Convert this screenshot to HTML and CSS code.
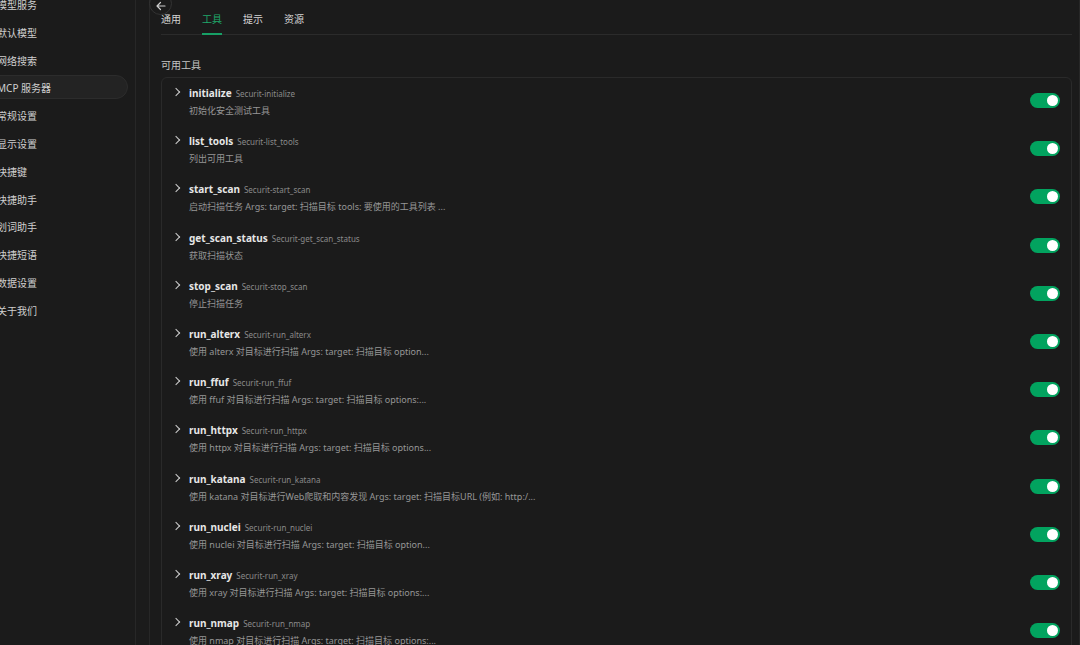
FILE: index.html
```html
<!DOCTYPE html>
<html lang="zh">
<head>
    <meta charset="utf-8">
    <title>设置</title>
    <link rel="stylesheet" href="styles.css">
</head>
<body>
    <div class="page">

        <!-- sidebar -->
        <div class="sidebar">
            <ul class="nav">
                <li>模型服务</li>
                <li>默认模型</li>
                <li>网络搜索</li>
                <li class="active">MCP 服务器</li>
                <li>常规设置</li>
                <li>显示设置</li>
                <li>快捷键</li>
                <li>快捷助手</li>
                <li>划词助手</li>
                <li>快捷短语</li>
                <li>数据设置</li>
                <li>关于我们</li>
            </ul>
        </div>

        <!-- main -->
        <div class="main">
            <div class="panel">
                <div class="back-btn">
                    <svg width="12" height="12" viewBox="0 0 12 12"><path d="M10 6H2M5.5 2.5L2 6l3.5 3.5" fill="none" stroke="#cfcfcf" stroke-width="1.2" stroke-linecap="round" stroke-linejoin="round"/></svg>
                </div>

                <div class="tabs">
                    <span class="tab">通用</span>
                    <span class="tab active">工具</span>
                    <span class="tab">提示</span>
                    <span class="tab">资源</span>
                </div>

                <h3 class="section-title">可用工具</h3>

                <div class="tool-list">
                    <div class="tool">
                        <span class="chevron"></span>
                        <div class="tool-info">
                            <div class="tool-head"><b>initialize</b><span>Securit-initialize</span></div>
                            <p>初始化安全测试工具</p>
                        </div>
                        <span class="switch"></span>
                    </div>
                    <div class="tool">
                        <span class="chevron"></span>
                        <div class="tool-info">
                            <div class="tool-head"><b>list_tools</b><span>Securit-list_tools</span></div>
                            <p>列出可用工具</p>
                        </div>
                        <span class="switch"></span>
                    </div>
                    <div class="tool">
                        <span class="chevron"></span>
                        <div class="tool-info">
                            <div class="tool-head"><b>start_scan</b><span>Securit-start_scan</span></div>
                            <p>启动扫描任务 Args: target: 扫描目标 tools: 要使用的工具列表 ...</p>
                        </div>
                        <span class="switch"></span>
                    </div>
                    <div class="tool">
                        <span class="chevron"></span>
                        <div class="tool-info">
                            <div class="tool-head"><b>get_scan_status</b><span>Securit-get_scan_status</span></div>
                            <p>获取扫描状态</p>
                        </div>
                        <span class="switch"></span>
                    </div>
                    <div class="tool">
                        <span class="chevron"></span>
                        <div class="tool-info">
                            <div class="tool-head"><b>stop_scan</b><span>Securit-stop_scan</span></div>
                            <p>停止扫描任务</p>
                        </div>
                        <span class="switch"></span>
                    </div>
                    <div class="tool">
                        <span class="chevron"></span>
                        <div class="tool-info">
                            <div class="tool-head"><b>run_alterx</b><span>Securit-run_alterx</span></div>
                            <p>使用 alterx 对目标进行扫描 Args: target: 扫描目标 option...</p>
                        </div>
                        <span class="switch"></span>
                    </div>
                    <div class="tool">
                        <span class="chevron"></span>
                        <div class="tool-info">
                            <div class="tool-head"><b>run_ffuf</b><span>Securit-run_ffuf</span></div>
                            <p>使用 ffuf 对目标进行扫描 Args: target: 扫描目标 options:...</p>
                        </div>
                        <span class="switch"></span>
                    </div>
                    <div class="tool">
                        <span class="chevron"></span>
                        <div class="tool-info">
                            <div class="tool-head"><b>run_httpx</b><span>Securit-run_httpx</span></div>
                            <p>使用 httpx 对目标进行扫描 Args: target: 扫描目标 options...</p>
                        </div>
                        <span class="switch"></span>
                    </div>
                    <div class="tool">
                        <span class="chevron"></span>
                        <div class="tool-info">
                            <div class="tool-head"><b>run_katana</b><span>Securit-run_katana</span></div>
                            <p>使用 katana 对目标进行Web爬取和内容发现 Args: target: 扫描目标URL (例如: http:/...</p>
                        </div>
                        <span class="switch"></span>
                    </div>
                    <div class="tool">
                        <span class="chevron"></span>
                        <div class="tool-info">
                            <div class="tool-head"><b>run_nuclei</b><span>Securit-run_nuclei</span></div>
                            <p>使用 nuclei 对目标进行扫描 Args: target: 扫描目标 option...</p>
                        </div>
                        <span class="switch"></span>
                    </div>
                    <div class="tool">
                        <span class="chevron"></span>
                        <div class="tool-info">
                            <div class="tool-head"><b>run_xray</b><span>Securit-run_xray</span></div>
                            <p>使用 xray 对目标进行扫描 Args: target: 扫描目标 options:...</p>
                        </div>
                        <span class="switch"></span>
                    </div>
                    <div class="tool">
                        <span class="chevron"></span>
                        <div class="tool-info">
                            <div class="tool-head"><b>run_nmap</b><span>Securit-run_nmap</span></div>
                            <p>使用 nmap 对目标进行扫描 Args: target: 扫描目标 options:...</p>
                        </div>
                        <span class="switch"></span>
                    </div>
                </div>
            </div>
        </div>
    </div>
</body>
</html>
```

FILE: styles.css
```css
* {
    margin: 0;
    padding: 0;
    box-sizing: border-box;
}

body {
    background: #1b1b1b;
    color: #d4d4d4;
    font-family: "Noto Sans", "Noto Sans CJK SC", sans-serif;
    height: 645px;
    overflow: hidden;
}

.page {
    display: flex;
    height: 645px;
}

/* Sidebar */

.sidebar {
    width: 136px;
    flex-shrink: 0;
    border-right: 1px solid #272727;
    overflow: hidden;
}

.nav {
    list-style: none;
    margin-left: -16px;
    margin-top: -8px;
    width: 144px;
}

.nav li {
    height: 24px;
    line-height: 24px;
    margin-bottom: 3.8px;
    padding-left: 12px;
    font-size: 10px;
    color: #cfcfcf;
    border-radius: 12px;
    border: 1px solid transparent;
}

.nav li.active {
    background: #232323;
    border-color: #2c2c2c;
}

/* Main */

.main {
    flex: 1;
    padding-left: 13px;
    overflow: hidden;
}

.panel {
    position: relative;
    height: 100%;
    border-left: 1px solid #272727;
    border-right: 1px solid #272727;
    padding: 0 7px 0 11px;
}

.back-btn {
    position: absolute;
    left: -1px;
    top: -8px;
    width: 23px;
    height: 23px;
    border-radius: 50%;
    border: 1px solid #333;
    background: #1b1b1b;
    display: flex;
    align-items: center;
    justify-content: center;
    padding-top: 4px;
}

.tabs {
    display: flex;
    gap: 21px;
    border-bottom: 1px solid #2b2b2b;
    padding-top: 12px;
}

.tab {
    font-size: 10px;
    line-height: 14px;
    padding-bottom: 7px;
    color: #d4d4d4;
    border-bottom: 2px solid transparent;
    margin-bottom: -1px;
}

.tab.active {
    color: #1fa86a;
    border-bottom-color: #17a066;
}

.section-title {
    font-size: 10px;
    font-weight: normal;
    color: #c4c4c4;
    line-height: 14px;
    margin-top: 23px;
    margin-bottom: 5px;
}

/* Tool list */

.tool-list {
    border: 1px solid #2a2a2a;
    border-radius: 6px;
    padding-top: 1px;
}

.tool {
    display: flex;
    align-items: flex-start;
    height: 48.2px;
    padding: 5px 11px 0 11px;
}

.chevron {
    width: 16px;
    height: 14px;
    flex-shrink: 0;
    position: relative;
}

.chevron::before {
    content: '';
    position: absolute;
    left: 0;
    top: 5px;
    width: 5px;
    height: 5px;
    border-top: 1.2px solid #cfcfcf;
    border-right: 1.2px solid #cfcfcf;
    transform: rotate(45deg);
}

.tool-info {
    flex: 1;
    min-width: 0;
}

.tool-head {
    line-height: 14px;
    white-space: nowrap;
}

.tool-head b {
    font-size: 10px;
    font-weight: bold;
    color: #e6e6e6;
}

.tool-head span {
    font-size: 8px;
    color: #8a8a8a;
    margin-left: 4px;
}

.tool-info p {
    font-size: 9px;
    line-height: 14px;
    margin-top: 3px;
    color: #969696;
    white-space: nowrap;
}

.switch {
    position: relative;
    width: 30px;
    height: 15px;
    margin-top: 9px;
    border-radius: 8px;
    background: #02a35f;
    flex-shrink: 0;
}

.switch::after {
    content: '';
    position: absolute;
    right: 2px;
    top: 2px;
    width: 11px;
    height: 11px;
    border-radius: 50%;
    background: #fff;
}
```
